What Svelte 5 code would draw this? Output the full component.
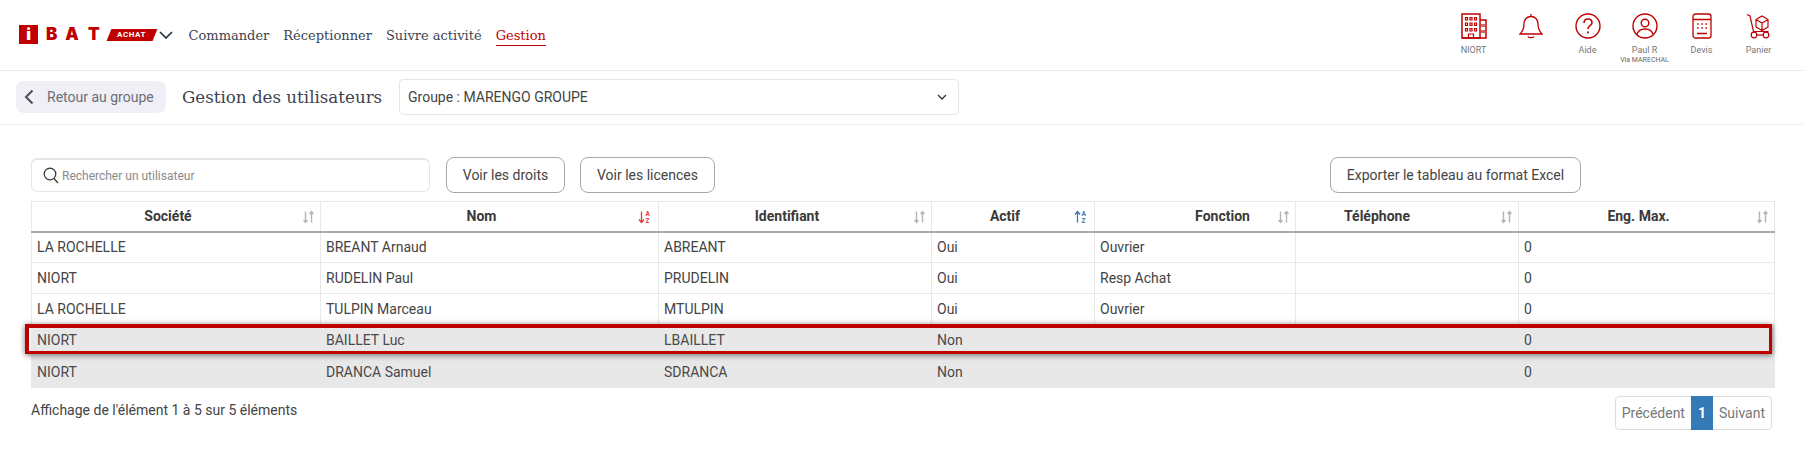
<script>
  const columns = [
    { label: 'Société', cls: 'c1', sort: 'none' },
    { label: 'Nom', cls: 'c2', sort: 'red' },
    { label: 'Identifiant', cls: 'c3', sort: 'none' },
    { label: 'Actif', cls: 'c4', sort: 'blue' },
    { label: 'Fonction', cls: 'c5', sort: 'none' },
    { label: 'Téléphone', cls: 'c6', sort: 'none' },
    { label: 'Eng. Max.', cls: 'c7', sort: 'none' }
  ];
  const rows = [
    ['LA ROCHELLE', 'BREANT Arnaud', 'ABREANT', 'Oui', 'Ouvrier', '', '0'],
    ['NIORT', 'RUDELIN Paul', 'PRUDELIN', 'Oui', 'Resp Achat', '', '0'],
    ['LA ROCHELLE', 'TULPIN Marceau', 'MTULPIN', 'Oui', 'Ouvrier', '', '0'],
    ['NIORT', 'BAILLET Luc', 'LBAILLET', 'Non', '', '', '0'],
    ['NIORT', 'DRANCA Samuel', 'SDRANCA', 'Non', '', '', '0']
  ];
</script>

<header class="top">
  <div class="logo">
    <span class="logo-i">i</span>
    <span class="logo-l b">B</span>
    <span class="logo-l a">A</span>
    <span class="logo-l t">T</span>
    <span class="achat"><span>ACHAT</span></span>
    <svg class="logo-chev" width="14" height="8" viewBox="0 0 14 8"><path d="M1 1l6 6 6-6" fill="none" stroke="#2a3340" stroke-width="1.7"/></svg>
  </div>
  <nav class="nav">
    <a>Commander</a>
    <a>Réceptionner</a>
    <a>Suivre activité</a>
    <a class="on">Gestion</a>
  </nav>
  <div class="tools">
    <div class="tool">
      <svg width="26" height="26" viewBox="0 0 26 26" fill="none" stroke="#c00000" stroke-width="1.2">
        <rect x="1" y="1" width="18" height="24" stroke-width="1.5"/><path d="M19 7h6v18h-6M1 25h24" stroke-width="1.5"/>
        <path d="M4.500 4.500h2v2.500h-2zM9 4.500h2v2.500h-2zM13.500 4.500h2v2.500h-2zM4.500 10h2v2.500h-2zM9 10h2v2.500h-2zM13.500 10h2v2.500h-2zM4.500 15.500h2v2.500h-2zM9 15.500h2v2.500h-2zM13.500 15.500h2v2.500h-2zM7.500 25v-4h5v4M21 11v3M23 11v3M21 17v3M23 17v3"/>
      </svg>
      <span>NIORT</span>
    </div>
    <div class="tool">
      <svg width="24" height="26" viewBox="0 0 24 26" fill="none" stroke="#c00000" stroke-width="1.3">
        <path d="M12 1v2.500M12 3.500c-4.500 0-7 3.500-7 7.500 0 5-1.500 7.500-4 10h22c-2.500-2.500-4-5-4-10 0-4-2.500-7.500-7-7.500zM9 23.500c.8 1.600 5.200 1.600 6 0"/>
      </svg>
    </div>
    <div class="tool">
      <svg width="26" height="26" viewBox="0 0 26 26" fill="none" stroke="#c00000" stroke-width="1.4">
        <circle cx="13" cy="13" r="12"/><path d="M9 10c0-2.500 1.800-4 4-4s4 1.500 4 3.700c0 3-4 3-4 6.300" stroke-width="1.6"/><path d="M13 18.500v1.800" stroke-width="1.8"/>
      </svg>
      <span>Aide</span>
    </div>
    <div class="tool">
      <svg width="26" height="26" viewBox="0 0 26 26" fill="none" stroke="#c00000" stroke-width="1.4">
        <circle cx="13" cy="13" r="12"/><circle cx="13" cy="10" r="3.800"/><path d="M5 21.500c1-4 4-5.500 8-5.500s7 1.500 8 5.500"/>
      </svg>
      <span>Paul R</span>
      <small>Via MARECHAL</small>
    </div>
    <div class="tool">
      <svg width="20" height="26" viewBox="0 0 20 26" fill="none" stroke="#c00000" stroke-width="1.3">
        <rect x="1" y="1" width="18" height="24" rx="2.500"/><path d="M1 6.500h18M5 20.500h10"/>
        <path d="M5 11h1.500M9.300 11h1.500M13.500 11h1.500M5 15h1.500M9.300 15h1.500M13.500 15h1.500" stroke-width="1.500"/>
      </svg>
      <span>Devis</span>
    </div>
    <div class="tool">
      <svg width="26" height="26" viewBox="0 0 26 26" fill="none" stroke="#c00000" stroke-width="1.200">
        <path d="M1 1.500l3 1.500 3.500 15.500h15"/><path d="M10 6.500l6-3.500 6 3.500v7.500l-6 3.500-6-3.500zM10 6.500l6 3.500 6-3.500M16 10v7.500"/>
        <circle cx="8" cy="22" r="2.800"/><circle cx="20" cy="22" r="2.800"/><path d="M10.800 22h6.400"/>
      </svg>
      <span>Panier</span>
    </div>
  </div>
</header>

<section class="sub">
  <button class="back">
    <svg width="10" height="16" viewBox="0 0 10 16"><path d="M8.500 1.500L2 8l6.500 6.500" fill="none" stroke="#4a4f5a" stroke-width="2"/></svg>
    <span>Retour au groupe</span>
  </button>
  <h1>Gestion des utilisateurs</h1>
  <div class="select">
    <span>Groupe : MARENGO GROUPE</span>
    <svg width="10" height="6" viewBox="0 0 10 6"><path d="M1 1l4 4 4-4" fill="none" stroke="#333" stroke-width="1.300"/></svg>
  </div>
</section>

<main class="content">
  <div class="toolbar">
    <div class="search">
      <svg width="16" height="17" viewBox="0 0 16 17" fill="none" stroke="#333" stroke-width="1.200"><circle cx="7" cy="7" r="5.800"/><path d="M11 11.500l4 4.500"/></svg>
      <span>Rechercher un utilisateur</span>
    </div>
    <button class="btn b1">Voir les droits</button>
    <button class="btn b2">Voir les licences</button>
    <button class="btn export">Exporter le tableau au format Excel</button>
  </div>

  <div class="table-wrap">
    <table>
      <thead>
        <tr>
          {#each columns as col}
            <th class={col.cls}>
              {col.label}
              <svg class="sort" class:idle={col.sort === 'none'} width="14" height="14" viewBox="0 0 14 14" fill="none">
                {#if col.sort === 'none'}
                  <path d="M3.500 1.500v11M1.500 10l2 2.500 2-2.500M9.500 12.500v-11M7.500 4l2-2.500 2 2.500" stroke="#b5b5b5" stroke-width="1.400"/>
                {:else if col.sort === 'red'}
                  <path d="M3.500 1.500v11M1 9.500l2.500 3 2.500-3" stroke="#e03a3a" stroke-width="1.300"/>
                  <text x="7.500" y="6" class="az red">A</text><text x="7.500" y="13" class="az red">Z</text>
                {:else}
                  <path d="M3.500 12.500v-11M1 4.500l2.500-3 2.500 3" stroke="#337ab7" stroke-width="1.300"/>
                  <text x="7.500" y="6" class="az blue">A</text><text x="7.500" y="13" class="az blue">Z</text>
                {/if}
              </svg>
            </th>
          {/each}
        </tr>
      </thead>
      <tbody>
        {#each rows as row, i}
          <tr class:off={i > 2}>
            {#each row as cell}
              <td>{cell}</td>
            {/each}
          </tr>
        {/each}
      </tbody>
    </table>
    <div class="mark"></div>
  </div>

  <div class="foot">
    <span class="info">Affichage de l'élément 1 à 5 sur 5 éléments</span>
    <div class="pager">
      <span>Précédent</span>
      <span class="cur">1</span>
      <span>Suivant</span>
    </div>
  </div>
</main>

<style>
  :global(body) {
    margin: 0;
    background: #fff;
    font-family: Roboto, "Liberation Sans", sans-serif;
    color: #444;
  }
  .top {
    height: 70px;
    border-bottom: 1px solid #e8e8e8;
    display: flex;
    align-items: flex-start;
    box-sizing: content-box;
  }
  .logo {
    display: flex;
    align-items: center;
    margin: 25px 0 0 19px;
    height: 19px;
  }
  .logo-i {
    width: 19px;
    height: 19px;
    background: #c00000;
    color: #fff;
    font: 900 16px/19px Inter, sans-serif;
    text-align: center;
  }
  .logo-l {
    color: #c00000;
    font: 900 17px/19px Inter, sans-serif;
  }
  .b { margin-left: 8px; }
  .a { margin-left: 8px; }
  .t { margin-left: 9px; }
  .achat {
    margin-left: 9px;
    width: 46px;
    height: 12px;
    background: #c00000;
    transform: skewX(-22deg);
    display: flex;
    align-items: center;
    justify-content: center;
  }
  .achat span {
    transform: skewX(22deg);
    color: #fff;
    font: 700 8px/12px Roboto, sans-serif;
    letter-spacing: 0.6px;
  }
  .logo-chev { margin-left: 4px; }
  .nav {
    display: flex;
    gap: 14px;
    margin: 26px 0 0 16px;
    font: 13px/20px "DejaVu Serif", serif;
    color: #3c4350;
  }
  .nav a { display: block; height: 19px; }
  .nav .on {
    color: #c00000;
    border-bottom: 1px solid #c00000;
  }
  .tools {
    margin-left: auto;
    margin-right: 16px;
    margin-top: 13px;
    display: flex;
  }
  .tool {
    width: 57px;
    display: flex;
    flex-direction: column;
    align-items: center;
    color: #777;
    font-size: 9px;
    line-height: 11px;
  }
  .tool svg { margin-bottom: 6px; }
  .tool small { font-size: 7px; line-height: 9px; color: #666; white-space: nowrap; }
  .sub {
    height: 52px;
    padding-bottom: 1px;
    border-bottom: 1px solid #eee;
    display: flex;
    align-items: center;
    padding-left: 16px;
    box-sizing: content-box;
  }
  .back {
    width: 150px;
    height: 32px;
    background: #f0eff6;
    border: 0;
    border-radius: 8px;
    display: flex;
    align-items: center;
    padding: 0 0 0 8px;
    gap: 13px;
    font: 14px Roboto, sans-serif;
    color: #6a6e78;
  }
  h1 {
    margin: 0 0 0 16px;
    font: 400 16.700px/24px "DejaVu Serif", serif;
    color: #3c4350;
    width: 201px;
    white-space: nowrap;
  }
  .select {
    margin-left: 16px;
    width: 560px;
    height: 36px;
    box-sizing: border-box;
    border: 1px solid #e6e6e6;
    border-radius: 4px;
    display: flex;
    align-items: center;
    justify-content: space-between;
    padding: 0 11px 0 8px;
    font-size: 14px;
    color: #444;
  }
  .content {
    padding: 32px 29px 0 31px;
  }
  .toolbar {
    display: flex;
    align-items: center;
    height: 36px;
  }
  .search {
    width: 399px;
    height: 34px;
    box-sizing: border-box;
    border: 1px solid #e6e6e6;
    border-top-width: 2px;
    border-radius: 6px;
    display: flex;
    align-items: center;
    padding-left: 11px;
    gap: 3px;
    font-size: 12px;
    color: #8a8a8a;
  }
  .btn {
    height: 36px;
    box-sizing: border-box;
    background: #fff;
    border: 1px solid #a8a8a8;
    border-radius: 8px;
    font: 14px Roboto, sans-serif;
    color: #444;
    padding: 0;
  }
  .b1 { width: 119px; margin-left: 16px; }
  .b2 { width: 135px; margin-left: 15px; }
  .export { width: 251px; margin-left: auto; margin-right: 193px; }
  .table-wrap {
    position: relative;
    margin-top: 8px;
    width: 1743px;
  }
  table {
    width: 100%;
    table-layout: fixed;
    border-collapse: collapse;
    font-size: 14px;
  }
  th {
    position: relative;
    height: 30px;
    padding: 0 16px 0 0;
    box-sizing: border-box;
    font-weight: 700;
    font-size: 14px;
    color: #3a3a3a;
    text-align: center;
    border: 1px solid #e8e8e8;
    border-bottom: 2px solid #aaa;
  }
  .sort { position: absolute; right: 6px; top: 8px; }
  .sort.idle { right: 4px; }
  .az { font: 700 6.500px Roboto, sans-serif; }
  .red { fill: #e03a3a; }
  .blue { fill: #337ab7; }
  .c1 { width: 289px; }
  .c2 { width: 338px; }
  .c3 { width: 273px; }
  .c4 { width: 163px; }
  .c5 { width: 201px; padding-left: 71px; }
  .c6 { width: 223px; padding-left: 4px; padding-right: 64px; }
  .c7 { width: 256px; }
  td {
    height: 31px;
    padding: 0 5px;
    box-sizing: border-box;
    border: 1px solid #e8e8e8;
    color: #444;
  }
  .off td {
    background: #e8e8e8;
    border-color: #e8e8e8;
    border-bottom: 0;
    color: #4a4a4a;
  }
  .off:last-child td { height: 32px; }
  .mark {
    position: absolute;
    left: -6px;
    top: 123px;
    width: 1747px;
    height: 30px;
    box-sizing: border-box;
    border: 3px solid #c00000;
    border-width: 4px 3px 3px 4px;
    box-shadow: 0 1px 6px rgba(0, 0, 0, 0.55);
  }
  .foot {
    width: 1741px;
    display: flex;
    justify-content: space-between;
    align-items: flex-start;
    margin-top: 8px;
  }
  .info {
    margin-top: 6px;
    font-size: 14px;
    line-height: 16px;
    color: #444;
  }
  .pager {
    display: flex;
    height: 34px;
    box-sizing: border-box;
    border: 1px solid #ddd;
    border-radius: 4px;
    font-size: 14px;
    line-height: 32px;
    color: #777;
  }
  .pager span { padding: 0 6px; }
  .pager .cur {
    width: 22px;
    box-sizing: border-box;
    text-align: center;
    background: #337ab7;
    color: #fff;
    font-weight: 700;
    margin: -1px 0;
    line-height: 34px;
  }
</style>
